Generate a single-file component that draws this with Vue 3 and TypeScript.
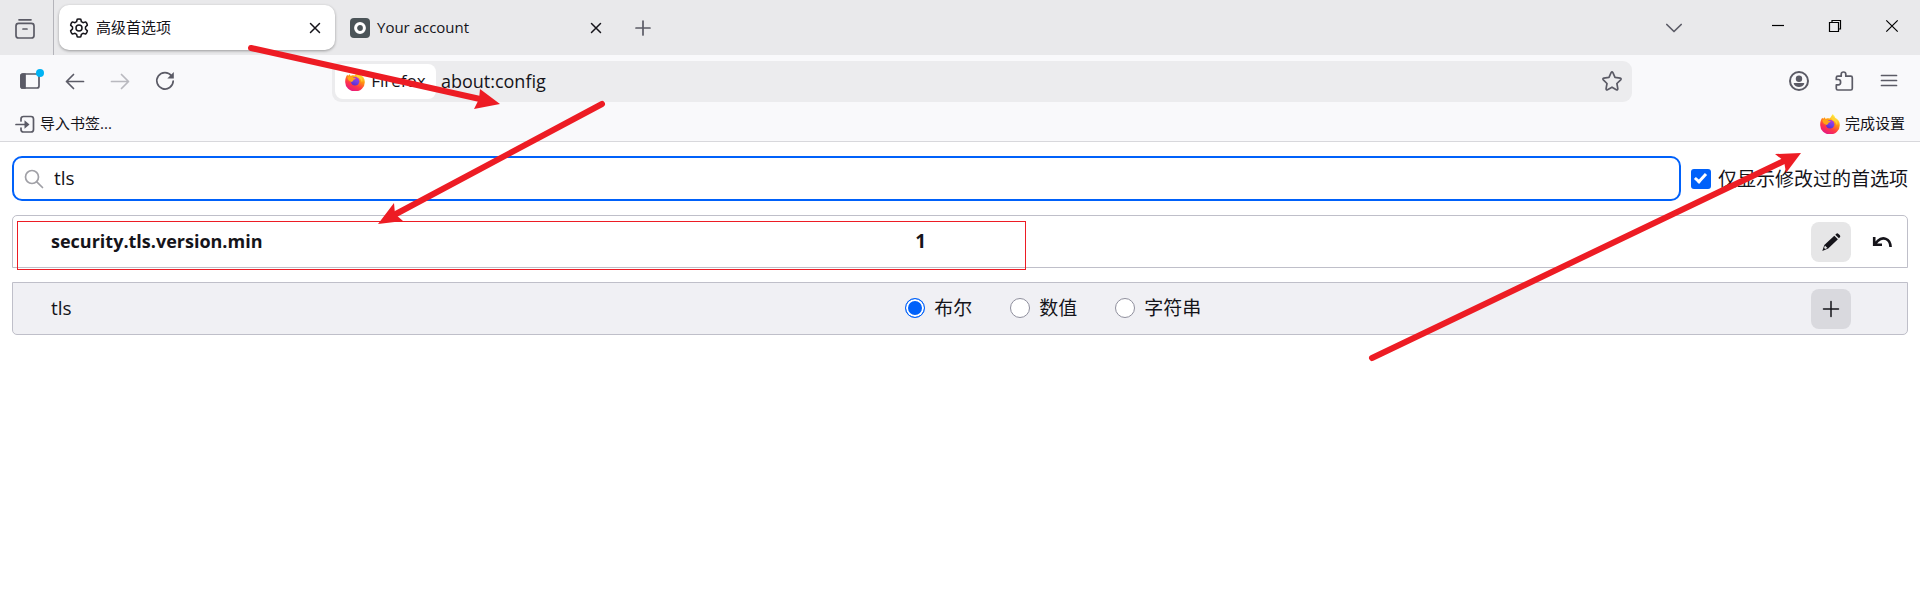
<script setup lang="ts">
import { ref } from 'vue'

interface Tab {
  title: string
  icon: 'gear' | 'site'
  active: boolean
}

const tabs: Tab[] = [
  { title: '高级首选项', icon: 'gear', active: true },
  { title: 'Your account', icon: 'site', active: false },
]

const types = [
  { value: 'boolean', label: '布尔' },
  { value: 'number', label: '数值' },
  { value: 'string', label: '字符串' },
]

const address = ref('about:config')
const query = ref('tls')
const onlyModified = ref(true)
const newType = ref('boolean')
</script>

<template>
  <div class="browser">
    <svg class="defs" width="0" height="0" aria-hidden="true">
      <defs>
        <linearGradient id="flame" x1="0.8" y1="0" x2="0.3" y2="1">
          <stop offset="0.1" stop-color="#fff44f" />
          <stop offset="0.4" stop-color="#ff980e" />
          <stop offset="0.7" stop-color="#ff3647" />
          <stop offset="1" stop-color="#e31587" />
        </linearGradient>
        <linearGradient id="globe" x1="0.7" y1="0" x2="0.3" y2="1">
          <stop offset="0" stop-color="#b833e1" />
          <stop offset="0.5" stop-color="#7542e5" />
          <stop offset="1" stop-color="#592acb" />
        </linearGradient>
        <symbol id="firefox" viewBox="0 0 20 20">
          <path fill="url(#flame)" d="M12.600 0c1.500 1.200 2.100 2.300 2.600 3.700C18 5 19.900 7.600 19.800 11.100A9.800 9.300 0 0 1 .2 11.200C.1 8.500.8 6 2.200 3.800l.9 1L4.800 3.200l.8 1.700c1.500-.6 2.700-.6 4.200-.5C10.600 3 12 2 12.600 0Z" />
          <circle cx="10.100" cy="10.200" r="4.300" fill="url(#globe)" />
          <path fill="#ffa516" d="M2.400 6.100c1.900-1.300 4.500-1.100 6 .7l2.300.2c-.1 1.100-1.500 1.500-2.200 1.700.1 1.200-1 1.500-1.700 2.400C4 10.600 2.500 8.600 2.400 6.100Z" />
          <path fill="#ffd233" d="M12.300.9c.7 1.300 1.500 2 2.400 3.300 2.300 1.700 3.500 4.200 2.300 7.200-.6-2.500-1.900-4.300-3.800-5C11.200 5.600 10.500 3 12.300.9Z" />
        </symbol>
      </defs>
    </svg>

    <header class="chrome">
      <div class="tabbar">
        <button class="view-button" type="button" aria-label="Firefox View">
          <svg class="icon" viewBox="0 0 20 20">
            <path d="M4 .8h12" />
            <rect x="1" y="4.300" width="18" height="14.700" rx="2.600" />
            <path d="M8 10h4" />
          </svg>
        </button>
        <div class="tabs" role="tablist">
          <div v-for="tab in tabs" :key="tab.title" class="tab" :class="{ active: tab.active }" role="tab" :aria-selected="tab.active">
            <svg v-if="tab.icon === 'gear'" class="icon dark" viewBox="0 0 20 20">
              <path d="M8.200 1.300Q10 .6 11.800 1.300L12.400 3.700 14 4.700 16.600 3.900Q18 5 18.400 7.100L16.500 9V11L18.400 12.900Q18 15 16.600 16.100L14 15.300 12.400 16.300 11.800 18.700Q10 19.400 8.200 18.700L7.600 16.300 6 15.300 3.400 16.100Q2 15 1.600 12.900L3.500 11V9L1.600 7.100Q2 5 3.400 3.900L6 4.700 7.600 3.700Z" />
              <circle cx="10" cy="10" r="3" />
            </svg>
            <svg v-else class="icon" viewBox="0 0 20 20">
              <rect class="site-tile" width="20" height="20" rx="4" />
              <circle class="site-ring" cx="10" cy="10" r="4.400" />
            </svg>
            <span class="tab-title">{{ tab.title }}</span>
            <button class="tab-close" type="button" aria-label="关闭标签页">
              <svg class="icon small dark" viewBox="0 0 12 12"><path d="M1.500 1.500l9 9M10.500 1.500l-9 9" /></svg>
            </button>
          </div>
        </div>
        <button class="new-tab" type="button" aria-label="新建标签页">
          <svg class="icon" viewBox="0 0 20 20"><path d="M10 3v14M3 10h14" /></svg>
        </button>
        <button class="list-tabs" type="button" aria-label="列出所有标签页">
          <svg class="icon" viewBox="0 0 20 20"><path d="M2.800 6.500L10 13.500l7.200-7" /></svg>
        </button>
        <div class="window-controls">
          <button type="button" aria-label="最小化">
            <svg class="icon small window" viewBox="0 0 12 12"><path d="M0 5.500h12" /></svg>
          </button>
          <button type="button" aria-label="还原">
            <svg class="icon small window" viewBox="0 0 12 12"><path d="M.5 2.500h9v9h-9zM3 2.500v-2h8.500V9h-2" /></svg>
          </button>
          <button type="button" aria-label="关闭">
            <svg class="icon small window" viewBox="0 0 12 12"><path d="M.3.3l11.400 11.400M11.700.3L.3 11.700" /></svg>
          </button>
        </div>
      </div>

      <nav class="navbar">
        <button class="tool" type="button" aria-label="侧栏">
          <svg class="icon" viewBox="0 0 20 20">
            <rect x="1" y="3" width="18" height="14" rx="2" />
            <path class="solid" d="M1 5q0-2 2-2h2v14H3q-2 0-2-2z" />
            <circle class="dot" cx="20" cy="2" r="4" />
          </svg>
        </button>
        <button class="tool" type="button" aria-label="后退">
          <svg class="icon" viewBox="0 0 20 20"><path d="M18.500 10.500h-17M8.500 3.500l-7 7 7 7" /></svg>
        </button>
        <button class="tool" type="button" aria-label="前进" disabled>
          <svg class="icon" viewBox="0 0 20 20"><path d="M1.500 10.500h17M11.500 3.500l7 7-7 7" /></svg>
        </button>
        <button class="tool" type="button" aria-label="重新载入">
          <svg class="icon" viewBox="0 0 20 20">
            <path d="M16.500 4.800A8.200 8.200 0 1 0 18.200 10" />
            <path class="fill" d="M18.800 1v6.500h-6.500z" />
          </svg>
        </button>
        <div class="spacer"></div>
        <div class="urlbar">
          <button class="identity" type="button">
            <svg class="icon"><use href="#firefox" /></svg>
            <span>Firefox</span>
          </button>
          <input v-model="address" class="address" type="text" aria-label="地址" />
          <button class="star" type="button" aria-label="为此页添加书签">
            <svg class="icon" viewBox="0 0 20 20">
              <path d="M9.100 1.600q.9-1.400 1.800 0L13 6.400l5.200.7q1.500.4.5 1.700l-3.800 3.700.9 5.200q0 1.600-1.500 1L10 16.200l-4.500 2.500q-1.400.6-1.400-1l.9-5.200L1.300 8.800q-1-1.300.5-1.700L7 6.400z" />
            </svg>
          </button>
        </div>
        <div class="spacer"></div>
        <button class="tool" type="button" aria-label="账户">
          <svg class="icon" viewBox="0 0 20 20">
            <circle class="bold" cx="10" cy="10" r="9" />
            <circle class="fill" cx="10" cy="7.700" r="3.200" />
            <path class="fill" d="M5.300 12h9.400q.8 0 .5 1-1.500 3-5.200 3t-5.200-3q-.3-1 .5-1z" />
          </svg>
        </button>
        <button class="tool" type="button" aria-label="扩展">
          <svg class="icon" viewBox="0 0 20 20">
            <path d="M2.300 8.500V6.700q0-1.500 1.500-1.500h3.400V3.300q0-2.300 2.300-2.300t2.300 2.300v1.900h5q1.500 0 1.500 1.500v10.800q0 1.500-1.500 1.500H3.800q-1.500 0-1.500-1.500v-3.600h2q2.300 0 2.300-2.700T4.300 8.500z" />
          </svg>
        </button>
        <button class="tool" type="button" aria-label="打开应用程序菜单">
          <svg class="icon" viewBox="0 0 20 20"><path d="M2.500 4.500h15M2.500 9.500h15M2.500 14.500h15" /></svg>
        </button>
      </nav>

      <div class="bookmarks">
        <button class="bookmark" type="button">
          <svg class="icon" viewBox="0 0 20 20">
            <path d="M6 7V5q0-2.500 2.500-2.500h7.500q2.500 0 2.500 2.500v10.500q0 2.500-2.500 2.500H8.500Q6 18 6 15.500V14M1 10.500h10" />
            <path class="fill" d="M9.500 6.200l5 4.300-5 4.300z" />
          </svg>
          <span>导入书签...</span>
        </button>
        <button class="bookmark" type="button">
          <svg class="icon"><use href="#firefox" /></svg>
          <span>完成设置</span>
        </button>
      </div>
    </header>

    <main class="content">
      <div class="search-row">
        <div class="search">
          <svg class="icon" viewBox="0 0 20 20"><circle cx="8" cy="8" r="6.500" /><path d="M12.800 12.800l5.700 5.700" /></svg>
          <input v-model="query" type="text" aria-label="搜索首选项名称" />
        </div>
        <label class="modified">
          <input v-model="onlyModified" type="checkbox" />
          <span>仅显示修改过的首选项</span>
        </label>
      </div>

      <table class="prefs">
        <colgroup><col class="col-name" /><col /><col class="col-action" /><col class="col-action" /></colgroup>
        <tbody>
          <tr>
            <th scope="row">security.tls.version.min</th>
            <td class="value">1</td>
            <td>
              <button class="action filled" type="button" aria-label="编辑">
                <svg class="icon" viewBox="0 0 20 20">
                  <path class="fill" d="M13.300 3.700l3.600 3.600L7.200 16.600 1.300 19l2-6zM14.300 2.700l1-1q1-1 2.200.2l1.200 1.200q1.200 1.200.2 2.200l-1 1z" />
                  <path class="tip" d="M3.900 13.600l2.500 2.500-2.300 1-1-1z" />
                </svg>
              </button>
            </td>
            <td>
              <button class="action" type="button" aria-label="重置">
                <svg class="icon" viewBox="0 0 20 20"><path class="thick" d="M2.200 5v7.800H10M3 12l3-3.300c4.400-4.300 12.200-2.700 12.600 6.300" /></svg>
              </button>
            </td>
          </tr>
        </tbody>
      </table>

      <table class="prefs add">
        <colgroup><col class="col-name" /><col /><col class="col-action" /><col class="col-action" /></colgroup>
        <tbody>
          <tr>
            <th scope="row">tls</th>
            <td>
              <div class="types">
                <label v-for="type in types" :key="type.value">
                  <input v-model="newType" type="radio" name="pref-type" :value="type.value" />
                  <span>{{ type.label }}</span>
                </label>
              </div>
            </td>
            <td>
              <button class="action filled" type="button" aria-label="添加">
                <svg class="icon" viewBox="0 0 20 20"><path d="M10 2.500v15M2.500 10h15" /></svg>
              </button>
            </td>
            <td></td>
          </tr>
        </tbody>
      </table>
    </main>

    <svg class="annotations" aria-hidden="true">
      <rect x="17.500" y="221.500" width="1008" height="48" />
      <path class="shaft" d="M251 48L480 99M602 104L394 215M1372 358L1784 161" />
      <path class="head" d="M500 104L480 89 479 99 474 109zM378 224L394 203 395 214 403 221zM1801 153L1775 154 1784 161 1786 173z" />
    </svg>
  </div>
</template>

<style>
body {
  margin: 0;
  background: #fff;
}
</style>

<style scoped>
.browser {
  position: relative;
  min-height: 100vh;
  font-family: "Open Sans", "Noto Sans CJK SC", sans-serif;
  font-size: 15px;
  line-height: 20px;
  color: #15141a;
}

.browser *,
.browser *::before {
  box-sizing: border-box;
}

.defs {
  position: absolute;
}

button,
input {
  margin: 0;
  padding: 0;
  border: 0;
  background: none;
  color: inherit;
  font: inherit;
}

button {
  display: flex;
  align-items: center;
  justify-content: center;
}

.icon {
  display: block;
  flex: none;
  width: 20px;
  height: 20px;
  overflow: visible;
  fill: none;
  stroke: #5b5b66;
  stroke-width: 1.700;
  stroke-linecap: round;
  stroke-linejoin: round;
}

.icon use {
  stroke: none;
}

.icon.small {
  width: 12px;
  height: 12px;
}

.icon.dark {
  stroke: #15141a;
  stroke-width: 1.500;
}

.icon.window {
  stroke: #000;
  stroke-width: 1.200;
  stroke-linecap: butt;
  stroke-linejoin: miter;
}

.icon .fill {
  fill: #5b5b66;
  stroke: none;
}

.icon .solid {
  fill: #5b5b66;
}

.icon .bold {
  stroke-width: 2;
}

.icon .dot {
  fill: #00b3f4;
  stroke: none;
}

.icon .site-tile {
  fill: #4b5458;
  stroke: none;
}

.icon .site-ring {
  stroke: #fff;
  stroke-width: 3;
}

.chrome {
  background: #f9f9fb;
  border-bottom: 1px solid #d8d8dc;
}

.tabbar {
  display: flex;
  align-items: stretch;
  height: 55px;
  background: #e9e9eb;
}

.view-button {
  width: 54px;
  padding: 2px 4px 0 0;
  border-right: 1px solid #b4b4ba;
}

.tabs {
  display: flex;
  gap: 5px;
  padding: 5px;
}

.tab {
  display: flex;
  align-items: center;
  gap: 7px;
  width: 276px;
  height: 45px;
  padding: 0 10px;
  border-radius: 10px;
}

.tab.active {
  background: #fff;
  box-shadow: 0 1px 3px rgb(0 0 0 / 35%);
}

.tab-title {
  flex: 1;
  padding-bottom: 2px;
}

.tab-close {
  width: 20px;
  height: 30px;
}

.new-tab {
  width: 44px;
}

.list-tabs {
  width: 46px;
  margin-left: auto;
}

.window-controls {
  display: flex;
  height: 52px;
  margin-left: 52px;
}

.window-controls button {
  width: 57px;
}

.navbar {
  display: flex;
  align-items: center;
  height: 52px;
  padding: 0 8px 0 7px;
}

.tool {
  width: 45px;
  height: 40px;
}

.tool:disabled {
  opacity: 0.4;
}

.spacer {
  flex: 146;
}

.urlbar {
  display: flex;
  align-items: center;
  flex: 1297;
  height: 41px;
  padding: 0 10px 0 3px;
  border-radius: 9px;
  background: #ececee;
  font-size: 18px;
}

.identity {
  gap: 6px;
  width: 101px;
  height: 35px;
  border-radius: 8px;
  background: #fff;
  font-size: 17px;
}

.identity .icon {
  width: 20px;
  height: 20px;
}

.address {
  flex: 1;
  height: 35px;
  padding: 0 5px;
  outline: none;
}

.bookmarks {
  display: flex;
  justify-content: space-between;
  height: 34px;
  padding: 0 15px;
}

.bookmark {
  gap: 5px;
}

.bookmark span {
  padding-bottom: 2px;
}

.content {
  display: flex;
  flex-direction: column;
  gap: 14px;
  padding: 14px 12px;
  font-size: 19px;
  line-height: 26px;
}

.search-row {
  display: flex;
  align-items: center;
  gap: 10px;
}

.search {
  display: flex;
  align-items: center;
  flex: 1;
  gap: 10px;
  height: 45px;
  padding: 0 10px;
  border: 2px solid #0061fa;
  border-radius: 10px;
}

.search .icon {
  stroke: #a0a0a6;
}

.search input {
  flex: 1;
  height: 40px;
  padding-bottom: 2px;
  outline: none;
}

.modified {
  display: flex;
  align-items: center;
  gap: 7px;
}

input[type="checkbox"] {
  display: grid;
  place-items: center;
  width: 20px;
  height: 20px;
  border-radius: 3px;
  appearance: none;
  background: #0061fa;
}

input[type="checkbox"]:checked::before {
  content: "";
  width: 7px;
  height: 12px;
  margin-bottom: 3px;
  border: solid #fff;
  border-width: 0 3px 3px 0;
  transform: rotate(42deg);
}

.prefs {
  width: 100%;
  height: 53px;
  table-layout: fixed;
  border: 1px solid #bfbfc9;
  border-radius: 5px 5px 0 0;
  border-spacing: 0;
}

.prefs.add {
  border-radius: 0 0 5px 5px;
  background: #f0f0f4;
}

.col-name {
  width: 47%;
}

.col-action {
  width: 51px;
}

.prefs th {
  padding: 0 0 2px 38px;
  font-size: 18px;
  text-align: left;
}

.prefs.add th {
  font-size: 19px;
  font-weight: 400;
}

.prefs td {
  padding: 0;
}

.prefs .value {
  padding: 0 0 2px 12px;
  font-weight: 700;
}

.types {
  display: flex;
  gap: 38px;
  padding: 0 0 2px 2px;
}

.types label {
  display: flex;
  align-items: center;
  gap: 9px;
}

input[type="radio"] {
  width: 20px;
  height: 20px;
  border: 1px solid #8f8f9d;
  border-radius: 50%;
  appearance: none;
  background: #fff;
}

input[type="radio"]:checked {
  border-color: #0061fa;
  background: #0061fa;
  box-shadow: inset 0 0 0 2px #fff;
}

.action {
  width: 40px;
  height: 40px;
  margin: auto;
  border-radius: 8px;
}

.action.filled {
  background: #e6e6e7;
}

.add .action.filled {
  background: #d9d9de;
}

.action .icon {
  stroke: #15141a;
  stroke-width: 1.500;
}

.action .icon .fill {
  fill: #15141a;
}

.action .icon .tip {
  fill: #e6e6e7;
  stroke: none;
}

.action .icon .thick {
  stroke-width: 2.600;
  stroke-linecap: butt;
  stroke-linejoin: miter;
}

.annotations {
  position: absolute;
  inset: 0;
  width: 100%;
  height: 100%;
  pointer-events: none;
  fill: none;
  stroke: #ed1c24;
}

.annotations .shaft {
  stroke-width: 6;
  stroke-linecap: round;
}

.annotations .head {
  fill: #ed1c24;
  stroke: none;
}
</style>
